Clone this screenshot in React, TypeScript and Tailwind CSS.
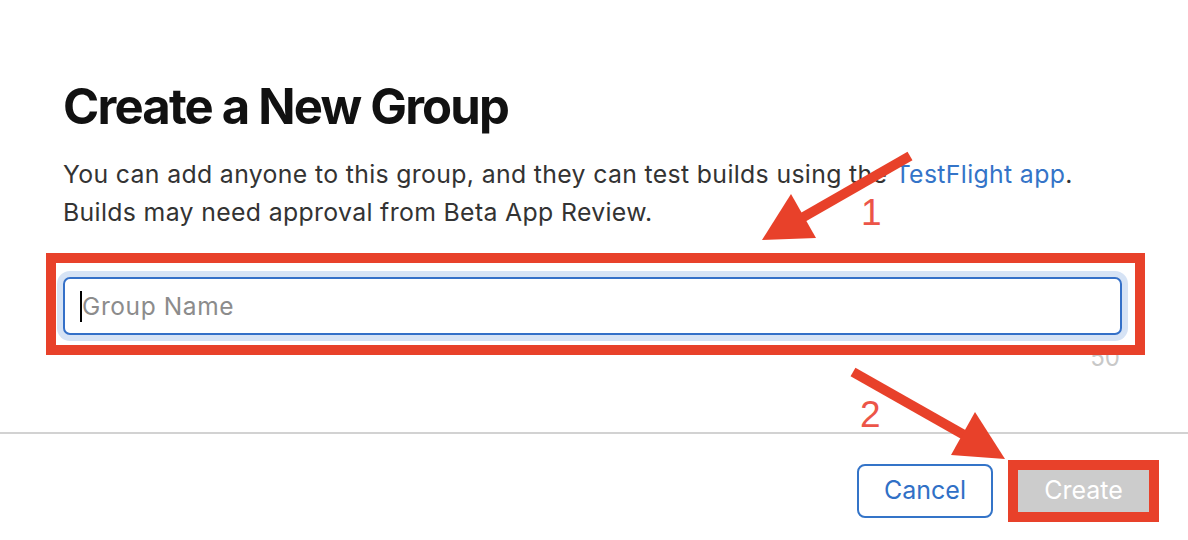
import React from "react";

const RED = "#E8412A";

function Annotations() {
  return (
    <div className="pointer-events-none absolute inset-0">
      <svg width="1188" height="540" className="absolute left-0 top-0">
        <line x1="910" y1="156" x2="800" y2="219" stroke={RED} strokeWidth="10" />
        <polygon points="762,240 791,194 816,238" fill={RED} />
        <line x1="853" y1="372" x2="966" y2="436" stroke={RED} strokeWidth="10" />
        <polygon points="1005,459 975,412 951,455" fill={RED} />
      </svg>
      <span className="absolute left-[861px] top-[191px] text-[37px] leading-[44px] text-[#EC5548] font-['Liberation_Sans',Arial,sans-serif]">
        1
      </span>
      <span className="absolute left-[860px] top-[393px] text-[37px] leading-[44px] text-[#EC5548] font-['Liberation_Sans',Arial,sans-serif]">
        2
      </span>
    </div>
  );
}

export default function App() {
  return (
    <div className="relative h-[540px] w-[1188px] overflow-hidden bg-white font-['Inter','Noto_Sans',sans-serif]">
      <div className="px-[63px] pt-[82px]">
        <h1 className="text-[49px] font-bold leading-[49px] tracking-[-1.8px] text-[#111111]">
          Create a New Group
        </h1>
        <p className="mt-[24px] text-[24.8px] leading-[38px] tracking-[0.35px] text-[#333333]">
          You can add anyone to this group, and they can test builds using the{" "}
          <span className="text-[#3474c8]">TestFlight app</span>.
          <br />
          Builds may need approval from Beta App Review.
        </p>

        <div className="mt-[46px] w-[1059px]">
          <div className="relative">
            <div className="flex h-[58px] items-center rounded-[7px] border-2 border-[#3470c8] bg-white pl-[15px] shadow-[0_0_0_6px_#d6e3f5]">
              <span className="h-[31px] w-[2px] bg-black" />
              <span className="text-[24.5px] tracking-[0.6px] text-[#8c8c8c]">Group Name</span>
            </div>
            <div className="pointer-events-none absolute -left-[17px] -right-[23px] -top-[24px] -bottom-[20px] border-[10px] border-[#E8412A]" />
          </div>
          <div className="mt-[8px] pr-[2px] text-right text-[24px] leading-[30px] text-[#c8c8c8]">
            50
          </div>
        </div>
      </div>

      <div className="mt-[59px] h-[2px] w-full bg-[#d2d2d2]" />

      <div className="flex items-center justify-end gap-[15px] pr-[29px] pt-[26px]">
        <button className="h-[54px] w-[136px] rounded-[8px] border-2 border-[#3474c8] text-[25px] text-[#3070c6]">
          Cancel
        </button>
        <div className="border-[10px] border-[#E8412A]">
          <button className="flex h-[42px] w-[131px] items-center justify-center bg-[#cccccc] text-[25px] text-white">
            Create
          </button>
        </div>
      </div>

      <Annotations />
    </div>
  );
}
